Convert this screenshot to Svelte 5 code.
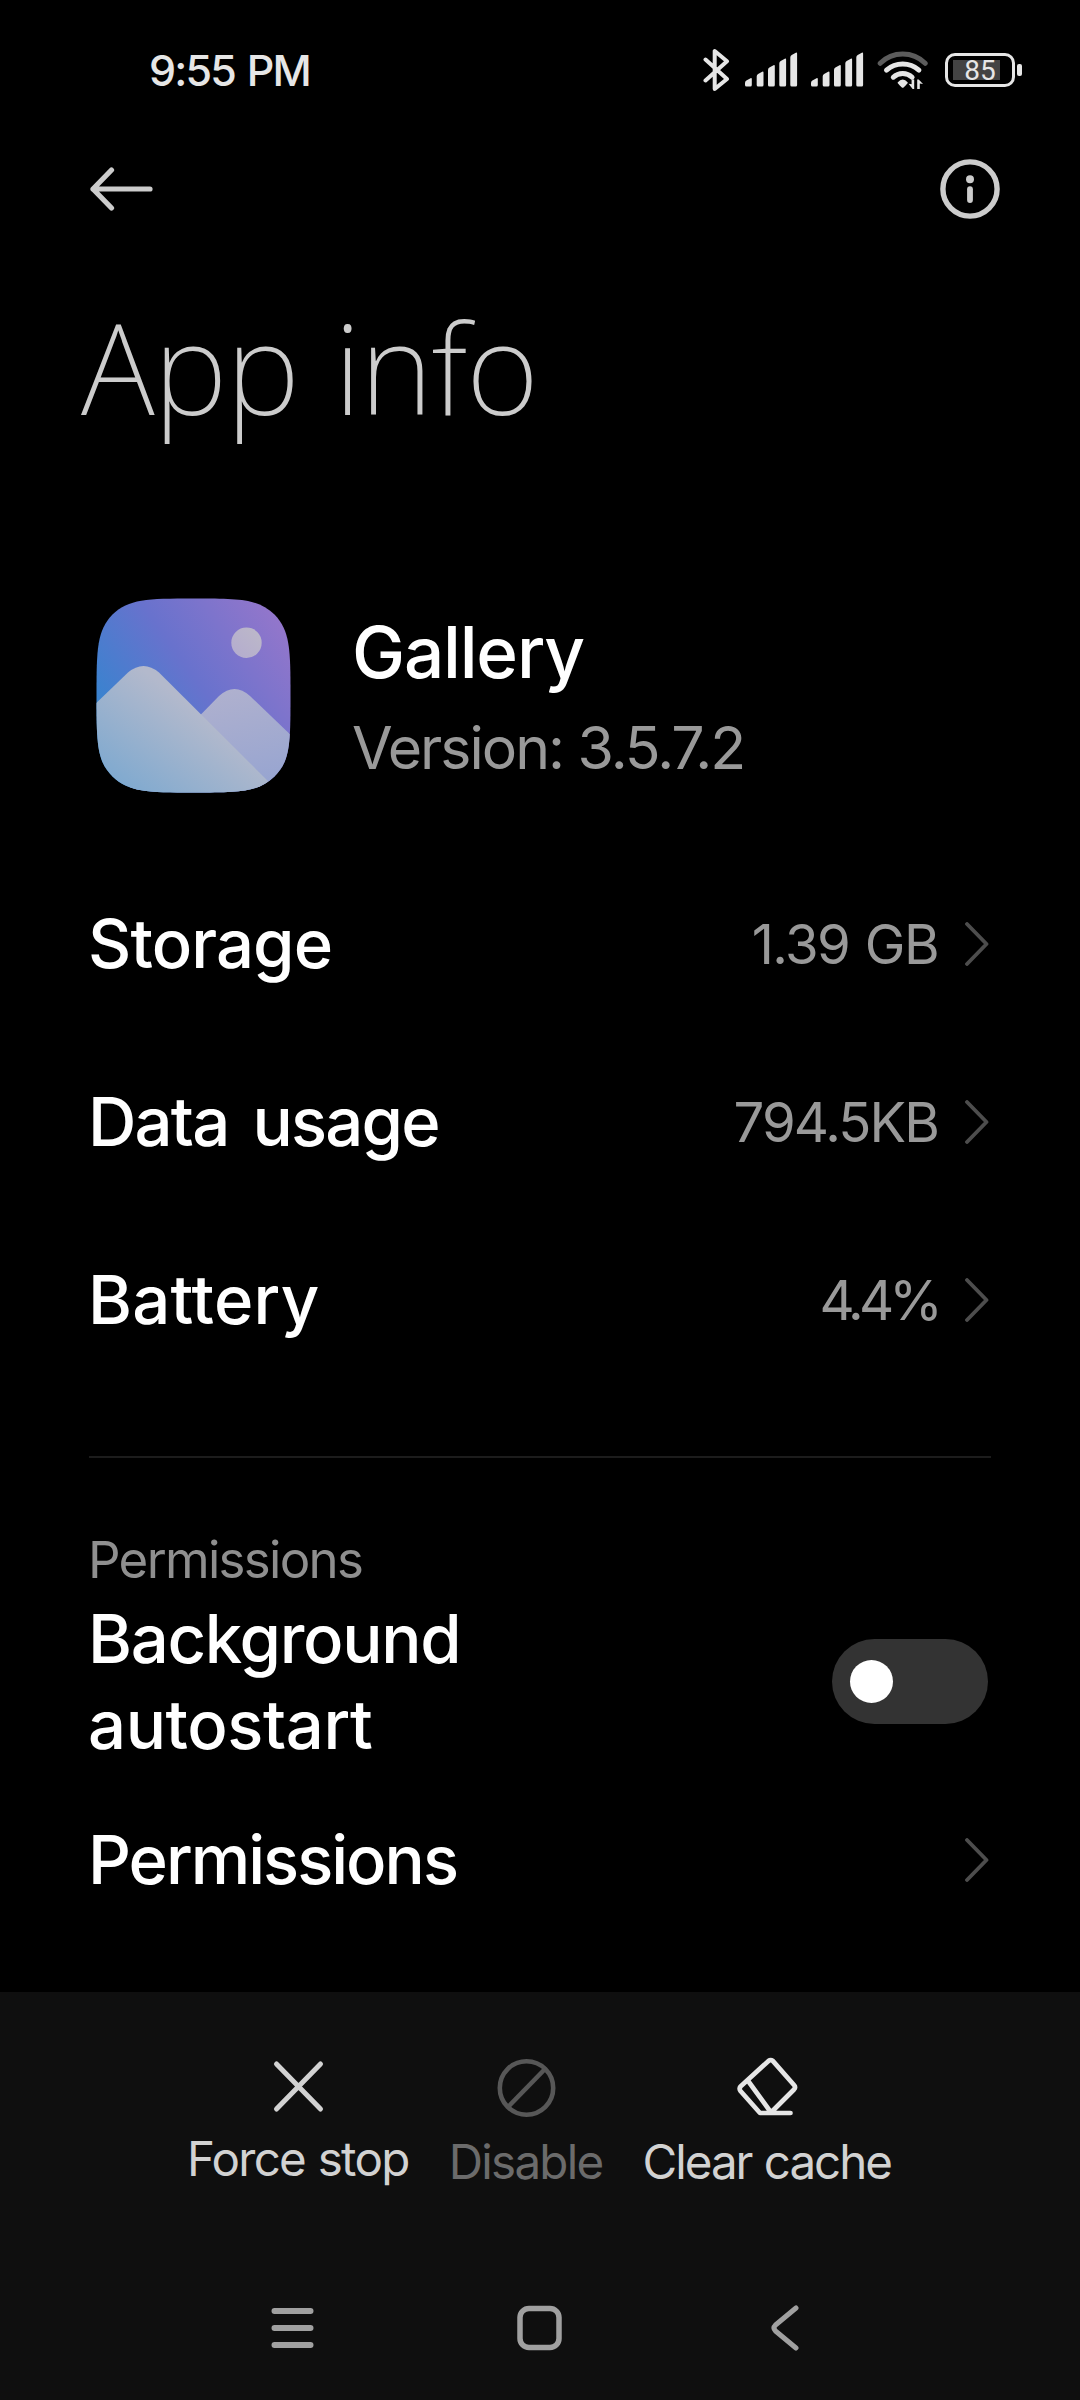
<script>
  let autostart = $state(false);

  const usage = [
    { label: "Storage", value: "1.39 GB", labelSpacing: -0.9, valueSpacing: -1.6 },
    { label: "Data usage", value: "794.5KB", labelSpacing: -1.8, valueSpacing: -1.9 },
    { label: "Battery", value: "4.4%", labelSpacing: 0.2, valueSpacing: -4.8 },
  ];

  // left edge and top of every signal bar
  const bars = [
    { x: 0, top: 26 },
    { x: 11.7, top: 19.5 },
    { x: 23, top: 13 },
    { x: 34.3, top: 6.5 },
    { x: 45.3, top: 0.5 },
  ];
</script>

{#snippet chevron()}
  <svg class="chevron" width="24" height="44" viewBox="0 0 24 44" fill="none" stroke="#4d4d4d" stroke-width="3.8" stroke-linecap="round" stroke-linejoin="round">
    <path d="M2 2L21.5 22L2 42" />
  </svg>
{/snippet}

{#snippet signal()}
  <svg class="signal" width="53" height="36" viewBox="0 0 53 36" fill="#e6e6e6">
    {#each bars as bar}
      <path d="M{bar.x} {bar.top + 5}q0 -1.6 1.4 -2.4L{bar.x + 5.5} {bar.top + 0.2}q1.3 -0.6 1.3 0.9V33q0 1.5 -1.5 1.5H{bar.x + 1.5}q-1.5 0 -1.5 -1.5z" />
    {/each}
  </svg>
{/snippet}

<div class="screen">
  <div class="status-bar">
    <span class="time">9:55 PM</span>
    <div class="status-icons">
      <svg class="bluetooth" width="27" height="44" viewBox="0 0 27 44" fill="none" stroke="#e6e6e6" stroke-width="4" stroke-linecap="round" stroke-linejoin="round">
        <path d="M2.5 32.5L24 13.3L11.7 3V41L24 31L2.5 11.5" />
      </svg>
      {@render signal()}
      {@render signal()}
      <svg class="wifi" width="52" height="40" viewBox="0 0 52 40" fill="none" stroke="#e6e6e6" stroke-width="5" stroke-linecap="round">
        <path d="M3.2 13.3A32 32 0 0 1 48.2 13.3" stroke="#5c5c5c" />
        <path d="M9.5 20.2A24.5 24.5 0 0 1 41.9 20.2" />
        <path d="M16.3 27.2A13.5 13.5 0 0 1 35.1 27.2" />
        <path d="M20.6 32.6Q25.7 26.4 30.8 32.6Q31 33.5 26.8 37.2Q25.7 38.2 24.6 37.2Q20.4 33.5 20.6 32.6z" fill="#e6e6e6" stroke="none" />
        <path d="M34.6 29.5h2.6v9.4h-1.6L31.6 33.8l3 .5zM40.2 38.9V29.5h1.5L46 33.9l-3.2 -.5v5.5z" fill="#e6e6e6" stroke="none" />
      </svg>
      <div class="battery">
        <div class="battery-body">
          <div class="battery-level"></div>
          <span class="battery-text">85</span>
        </div>
        <div class="battery-cap"></div>
      </div>
    </div>
  </div>

  <div class="toolbar">
    <button aria-label="Back">
      <svg width="64" height="44" viewBox="0 0 64 44" fill="none" stroke="#cccccc" stroke-width="5.2" stroke-linecap="round" stroke-linejoin="round">
        <path d="M22.5 3L4 22L22.5 41M4 22H61" />
      </svg>
    </button>
    <button aria-label="About">
      <svg width="60" height="60" viewBox="0 0 60 60" fill="none" stroke="#cccccc">
        <circle cx="30" cy="30" r="27.1" stroke-width="5.4" />
        <circle cx="30" cy="20.2" r="4" fill="#cccccc" stroke="none" />
        <path d="M30 30.2V41" stroke-width="5.8" stroke-linecap="round" />
      </svg>
    </button>
  </div>

  <h1>App info</h1>

  <div class="app">
    <svg width="196" height="196" viewBox="0 0 196 196">
      <defs>
        <linearGradient id="sky" x1="0" y1="0.6" x2="0.85" y2="0">
          <stop offset="0" stop-color="#3485cf" />
          <stop offset="0.5" stop-color="#6872cd" />
          <stop offset="1" stop-color="#9276cb" />
        </linearGradient>
        <linearGradient id="front" x1="0.05" y1="1" x2="0.65" y2="0.45">
          <stop offset="0" stop-color="#74a6d0" />
          <stop offset="1" stop-color="#b3b9cc" />
        </linearGradient>
        <linearGradient id="rear" x1="0.8" y1="1" x2="0.5" y2="0">
          <stop offset="0" stop-color="#94a3d1" />
          <stop offset="1" stop-color="#b0b1ce" />
        </linearGradient>
        <linearGradient id="sun" x1="0" y1="1" x2="1" y2="0">
          <stop offset="0" stop-color="#b3abcf" />
          <stop offset="1" stop-color="#bdb9c8" />
        </linearGradient>
        <clipPath id="tile">
          <path d="M98 0.5C145 0.5 162 1 178.5 16.5C194 33 194.5 50 194.5 98C194.5 146 194 163 178.5 178.5C162 194 145 194.5 98 194.5C50 194.5 33 194 16.5 178.5C1 163 0.5 146 0.5 98C0.5 50 1 33 16.5 16.5C33 1 50 0.5 98 0.5z" />
        </clipPath>
      </defs>
      <g clip-path="url(#tile)">
        <rect width="196" height="196" fill="url(#sky)" />
        <circle cx="150.5" cy="44.7" r="15.2" fill="url(#sun)" />
        <path d="M36 187L123 98Q138.5 84 154 98L200 142V200H26z" fill="url(#rear)" />
        <path d="M-4 109L32 74.5Q47.5 61.5 63 74.5L192 203H-4z" fill="url(#front)" />
      </g>
    </svg>
    <div class="app-text">
      <div class="app-name">Gallery</div>
      <div class="app-version">Version: 3.5.7.2</div>
    </div>
  </div>

  {#each usage as item}
    <div class="row">
      <span class="label" style="letter-spacing: {item.labelSpacing}px">{item.label}</span>
      <span class="value" style="letter-spacing: {item.valueSpacing}px">{item.value}</span>
      {@render chevron()}
    </div>
  {/each}

  <div class="divider"></div>

  <div class="section-title">Permissions</div>
  <div class="autostart">
    <span class="label">Background <span class="wide">autostart</span></span>
    <button class="toggle" class:on={autostart} onclick={() => (autostart = !autostart)} aria-label="Background autostart">
      <span class="knob"></span>
    </button>
  </div>
  <div class="row permissions">
    <span class="label">Permissions</span>
    {@render chevron()}
  </div>

  <div class="bottom">
    <div class="actions">
      <button class="action force-stop">
        <svg width="60" height="60" viewBox="0 0 60 60" fill="none" stroke="#d2d2d2" stroke-width="5" stroke-linecap="round">
          <path d="M8.5 7L52.5 52M52.5 7L8.5 52" />
        </svg>
        <span>Force stop</span>
      </button>
      <button class="action disable" disabled>
        <svg width="60" height="60" viewBox="0 0 60 60" fill="none" stroke="#575757" stroke-width="4.6">
          <circle cx="30.5" cy="31" r="26.7" />
          <path d="M12 50L49 12" />
        </svg>
        <span>Disable</span>
      </button>
      <button class="action clear">
        <svg width="62" height="60" viewBox="0 0 62 60" fill="none" stroke="#e6e6e6" stroke-width="4.7" stroke-linecap="round" stroke-linejoin="round">
          <path d="M54.5 56H24L4.5 34Q2.8 31.8 4.5 29.5L32.5 3.9Q34.7 2.2 36.8 3.9L58 28Q60 30.2 58 32.5L35 55.5L12.5 24.5" />
        </svg>
        <span>Clear cache</span>
      </button>
    </div>
    <div class="nav">
      <button aria-label="Recents">
        <svg width="46" height="46" viewBox="0 0 46 46" stroke="#a0a0a0" stroke-width="6" stroke-linecap="round">
          <path d="M4.5 6H40.5M4.5 23H40.5M4.5 40H40.5" />
        </svg>
      </button>
      <button aria-label="Home">
        <svg width="46" height="46" viewBox="0 0 46 46" fill="none" stroke="#a0a0a0" stroke-width="5.5">
          <rect x="3" y="3.5" width="39" height="39" rx="9" />
        </svg>
      </button>
      <button aria-label="Back">
        <svg width="37" height="46" viewBox="0 0 37 46" fill="none" stroke="#a0a0a0" stroke-width="5" stroke-linecap="round" stroke-linejoin="round">
          <path d="M32 3L11.5 20Q8.500 23 11.5 26L32 43" />
        </svg>
      </button>
    </div>
  </div>
</div>

<style>
  :global(body) {
    background: #000;
  }

  .screen {
    display: flex;
    flex-direction: column;
    box-sizing: border-box;
    width: 1080px;
    height: 2400px;
    background: #000;
    color: #fff;
    font-family: Inter, "Noto Sans", sans-serif;
  }

  button {
    display: flex;
    padding: 0;
    border: none;
    background: none;
    color: inherit;
    font-family: inherit;
    cursor: pointer;
  }

  svg {
    display: block;
    flex: none;
  }

  .status-bar {
    display: flex;
    align-items: center;
    justify-content: space-between;
    height: 140px;
    padding: 0 58px 0 149px;
  }

  .time {
    color: #e6e6e6;
    font-size: 43px;
    font-weight: 480;
    letter-spacing: -1.8px;
    word-spacing: 2px;
  }

  .status-icons {
    display: flex;
    align-items: center;
  }

  .bluetooth {
    margin-right: 15px;
  }

  .signal {
    margin-right: 13px;
  }

  .battery {
    display: flex;
    align-items: center;
    gap: 2px;
    margin-left: 16px;
  }

  .battery-body {
    position: relative;
    box-sizing: border-box;
    width: 70px;
    height: 34px;
    padding: 4px 5px;
    border: 3px solid #e6e6e6;
    border-radius: 10px;
  }

  .battery-level {
    width: 47px;
    height: 20px;
    background: #434343;
  }

  .battery-text {
    position: absolute;
    inset: 0;
    color: #e6e6e6;
    font-family: Roboto, sans-serif;
    font-size: 28px;
    font-weight: 450;
    line-height: 29px;
    text-align: center;
  }

  .battery-cap {
    width: 5px;
    height: 12px;
    border-radius: 2px;
    background: #e6e6e6;
  }

  .toolbar {
    display: flex;
    align-items: center;
    justify-content: space-between;
    height: 98px;
    padding: 0 80px 0 89px;
  }

  h1 {
    height: 264px;
    margin: 0 0 0 81px;
    color: #cccccc;
    font-family: "Noto Sans", sans-serif;
    font-size: 125px;
    font-weight: 250;
    line-height: 258px;
    letter-spacing: -1.2px;
    word-spacing: 4px;
  }

  .app {
    display: flex;
    gap: 60px;
    height: 257px;
    padding: 96px 88px 0 96px;
  }

  .app-text {
    padding-top: 6px;
  }

  .app-name {
    font-size: 71px;
    font-weight: 480;
    line-height: 96px;
    letter-spacing: -1.2px;
  }

  .app-version {
    color: #999;
    font-size: 59px;
    font-weight: 380;
    line-height: 96px;
    letter-spacing: -2px;
  }

  .row {
    display: flex;
    align-items: center;
    height: 178px;
    padding: 0 91px 0 88px;
  }

  .label {
    flex: 1;
    font-size: 67px;
    font-weight: 480;
    line-height: 86px;
    letter-spacing: -1.3px;
    word-spacing: 8px;
  }

  .value {
    color: #999;
    font-size: 54.5px;
    font-weight: 380;
    word-spacing: 2px;
  }

  .chevron {
    margin-left: 27px;
  }

  .divider {
    height: 2px;
    margin: 67px 89px 0;
    background: #1c1c1c;
  }

  .section-title {
    margin: 72px 88px 0;
    color: #8f8f8f;
    font-size: 51px;
    font-weight: 380;
    line-height: 60px;
    letter-spacing: -1.7px;
  }

  .autostart {
    display: flex;
    align-items: center;
    justify-content: space-between;
    margin-top: 5px;
    padding: 0 92px 0 88px;
  }

  .autostart .label {
    flex: none;
    width: 460px;
    padding-top: 1px;
  }

  .wide {
    letter-spacing: -0.4px;
  }

  .toggle {
    align-items: center;
    box-sizing: border-box;
    width: 156px;
    height: 85px;
    padding: 0 18px;
    border-radius: 43px;
    background: #333;
  }

  .toggle.on {
    justify-content: flex-end;
    background: #277af7;
  }

  .knob {
    width: 43px;
    height: 43px;
    border-radius: 50%;
    background: #fff;
  }

  .permissions {
    height: 184px;
  }

  .permissions .label {
    letter-spacing: -2px;
  }

  .bottom {
    display: flex;
    flex-direction: column;
    flex: none;
    height: 408px;
    margin-top: auto;
    background: #0f0f0f;
  }

  .actions {
    display: flex;
    gap: 40px;
    padding: 65px 0 0 187px;
  }

  .action {
    flex-direction: column;
    align-items: center;
    color: #d2d2d2;
    font-size: 47.5px;
    font-weight: 370;
    line-height: 60px;
    letter-spacing: -1.7px;
    word-spacing: 1px;
    white-space: nowrap;
  }

  .action span {
    margin-top: 15px;
  }

  .action.force-stop span {
    margin-top: 12px;
  }

  .disable {
    color: #6b6b6b;
  }

  .clear {
    letter-spacing: -2px;
  }

  .nav {
    display: flex;
    justify-content: space-between;
    margin-top: auto;
    padding: 0 279px 49px 270px;
  }
</style>
